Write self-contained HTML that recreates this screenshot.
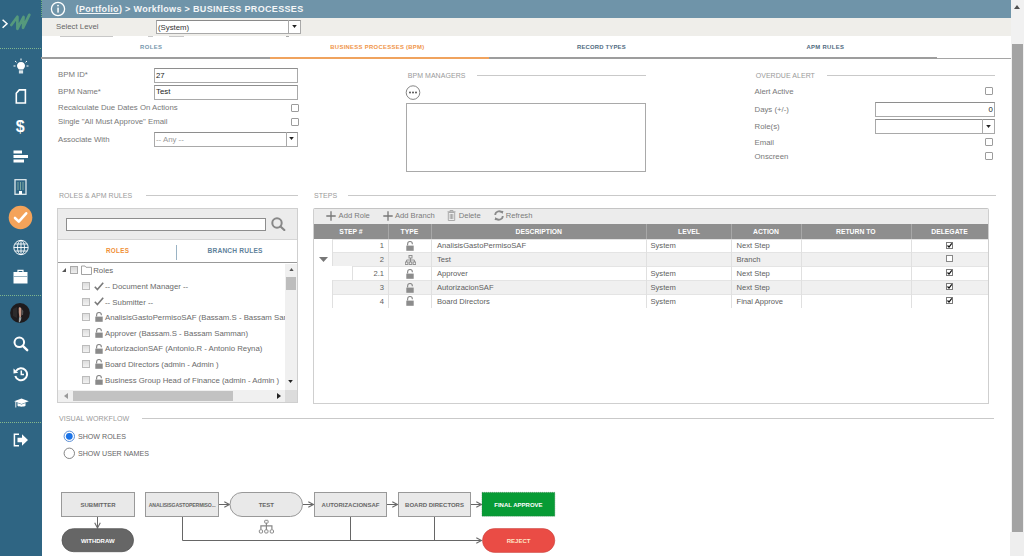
<!DOCTYPE html>
<html><head><meta charset="utf-8">
<style>
*{box-sizing:border-box;margin:0;padding:0}
html,body{width:1024px;height:556px;overflow:hidden;background:#fff;font-family:"Liberation Sans",sans-serif;color:#555}
.a{position:absolute}
.t{position:absolute;white-space:nowrap;line-height:10px}
#sb{left:0;top:0;width:41.5px;height:556px;background:#2f6583}
#hd{left:41.5px;top:0;width:969.5px;height:17.5px;background:#6f94a9}
#lv{left:41.5px;top:17.5px;width:969.5px;height:18px;background:#efeeea}
#scr{left:1011px;top:0;width:14px;height:556px;background:#f1f1f1}
.inp{position:absolute;background:#fff;border:1px solid #a9a9a9;border-top-color:#8e8e8e}
.cb{position:absolute;width:8px;height:8px;border:1px solid #9c9c9c;background:#fff;border-radius:1px}
.lbl{font-size:7.8px;color:#787878}
.sec{font-size:7px;color:#9a9a9a;letter-spacing:0.05px}
.hr{position:absolute;height:1px;background:#c9c9c9}
</style></head><body>
<div id="sb" class="a"></div>
<div id="hd" class="a"></div>
<div id="lv" class="a"></div>
<div id="scr" class="a"></div>

<!-- header -->
<div class="a" style="left:41px;top:0;width:1px;height:17px;border-left:1px dotted #6fae7e"></div>
<svg class="a" style="left:50px;top:1px" width="16" height="16" viewBox="0 0 16 16"><circle cx="8" cy="8" r="6.6" fill="none" stroke="#fff" stroke-width="1.3"/><rect x="7.3" y="6.6" width="1.5" height="5" fill="#fff"/><circle cx="8" cy="4.6" r="0.9" fill="#fff"/></svg>
<div class="t" style="left:75.6px;top:4.3px;font-size:9px;font-weight:bold;letter-spacing:0.33px;color:#f4f6f7">(<span style="text-decoration:underline">Portfolio</span>) &gt; Workflows &gt; BUSINESS PROCESSES</div>

<!-- select level -->
<div class="t lbl" style="left:56px;top:22px;color:#666">Select Level</div>
<div class="inp" style="left:156px;top:19.5px;width:145px;height:14.5px;border-top:1.5px solid #8a8a8a"></div>
<div class="a" style="left:288px;top:20px;width:1px;height:13.5px;background:#a9a9a9"></div>
<div class="t" style="left:158px;top:22.5px;font-size:7.8px;color:#333">(System)</div>

<!-- hidden row remnants -->
<div class="a" style="left:60px;top:35.5px;width:53px;height:1px;background:#c8c8c8"></div>
<div class="a" style="left:148px;top:35.5px;width:5px;height:1px;background:#c8c8c8"></div>
<div class="a" style="left:169px;top:35.5px;width:15px;height:1px;background:#c8c8c8"></div>
<div class="a" style="left:286px;top:35.5px;width:3px;height:1px;background:#aaa"></div>
<!-- tabs -->
<div class="t" style="left:140px;top:42px;font-size:5.9px;font-weight:bold;letter-spacing:0.4px;color:#7797ad">ROLES</div>
<div class="t" style="left:330.3px;top:42px;font-size:5.9px;font-weight:bold;letter-spacing:0.3px;color:#f0954a">BUSINESS PROCESSES (BPM)</div>
<div class="t" style="left:577px;top:42px;font-size:5.9px;font-weight:bold;letter-spacing:0.19px;color:#4e6a7e">RECORD TYPES</div>
<div class="t" style="left:806.4px;top:42px;font-size:5.9px;font-weight:bold;letter-spacing:0.35px;color:#4e6a7e">APM RULES</div>
<div class="a" style="left:41px;top:58px;width:969.5px;height:1px;background:#a5a5a5"></div>
<div class="a" style="left:41px;top:57px;width:896px;height:2px;background:#9d9d9d"></div>
<div class="a" style="left:270px;top:57px;width:219px;height:2px;background:#f0a35e"></div>


<!-- sidebar icons -->
<svg class="a" style="left:0;top:0" width="41" height="40" viewBox="0 0 41 40">
 <path d="M2.6 19.8 L7 23.8 L2.6 27.8" fill="none" stroke="#fff" stroke-width="1.5"/>
 <path d="M11.3 25 L17.4 16.8 L17.4 28.8 L23.5 17 L23 27.8 L29.3 14.8" fill="none" stroke="#55997c" stroke-width="2.7" stroke-linejoin="round" stroke-linecap="round"/>
</svg>
<div class="a" style="left:0;top:47.5px;width:41px;height:1px;border-top:1px dotted #7fb58f"></div>
<svg class="a" style="left:13px;top:58px" width="16" height="17" viewBox="0 0 16 17">
 <path d="M8 4 C5.2 4 4 6 4 7.8 C4 9.6 5.3 10.6 5.8 11.6 L10.2 11.6 C10.7 10.6 12 9.6 12 7.8 C12 6 10.8 4 8 4Z" fill="#fff"/>
 <rect x="5.9" y="12.3" width="4.2" height="3.2" fill="#d9e4ea"/>
 <path d="M8 0.5 V2.5 M2 3 L3.5 4.3 M14 3 L12.5 4.3 M0.5 8 H2.5 M13.5 8 H15.5" stroke="#fff" stroke-width="1"/>
</svg>
<svg class="a" style="left:15px;top:89px" width="12" height="15" viewBox="0 0 12 15">
 <path d="M4.3 0.9 H10.4 V14 H1.3 V4.2 Z" fill="none" stroke="#fff" stroke-width="1.6" stroke-linejoin="miter"/>
</svg>
<div class="t" style="left:15.8px;top:117.5px;font-size:16px;line-height:18px;font-weight:bold;color:#fff">$</div>
<svg class="a" style="left:13px;top:150px" width="16" height="14" viewBox="0 0 16 14">
 <rect x="0.5" y="0.5" width="8.5" height="3" fill="#fff"/><rect x="0.5" y="5" width="14.5" height="3" fill="#fff"/><rect x="0.5" y="9.5" width="10.5" height="3" fill="#fff"/>
</svg>
<svg class="a" style="left:14px;top:179px" width="13" height="16" viewBox="0 0 13 16">
 <rect x="1" y="0.7" width="11" height="14.6" fill="none" stroke="#dfe8ec" stroke-width="1.3"/>
 <path d="M4 3 V11 M6.5 3 V11 M9 3 V11" stroke="#8fb9a8" stroke-width="0.8"/>
 <rect x="5" y="12" width="3" height="3" fill="#fff"/>
</svg>
<svg class="a" style="left:8px;top:204.5px" width="25" height="25" viewBox="0 0 25 25">
 <circle cx="12.5" cy="12.5" r="11.8" fill="#f4a35a"/>
 <path d="M7 13 L10.8 16.6 L18.2 8.3" fill="none" stroke="#fff" stroke-width="2.6" stroke-linecap="round" stroke-linejoin="round"/>
</svg>
<svg class="a" style="left:12.5px;top:238.5px" width="16" height="17" viewBox="0 0 16 17">
 <g fill="none" stroke="#fff" stroke-width="0.9"><circle cx="8" cy="8.5" r="7.2"/><ellipse cx="8" cy="8.5" rx="3.5" ry="7.2"/><path d="M8 1.3 V15.7 M0.8 8.5 H15.2 M1.8 5 H14.2 M1.8 12 H14.2"/></g>
</svg>
<svg class="a" style="left:13px;top:269px" width="15" height="15" viewBox="0 0 15 15">
 <path d="M5 3 V1.3 H10 V3" fill="none" stroke="#fff" stroke-width="1.2"/>
 <rect x="0.5" y="3" width="14" height="11.5" fill="#fff"/>
 <rect x="0.5" y="7" width="14" height="0.8" fill="#7b9fb3"/>
</svg>
<div class="a" style="left:0;top:295px;width:41px;height:1px;border-top:1px dotted #7fb58f"></div>
<svg class="a" style="left:10px;top:303px" width="20" height="20" viewBox="0 0 20 20">
 <circle cx="10" cy="10" r="9.9" fill="#1e1b1d"/>
 <path d="M3 6 L7 4 L7 15 L3 13Z" fill="#2c2a2b"/>
 <path d="M9.3 4.3 C10.6 4 11.6 5 11.4 7 C11.3 9 11.6 11.5 10.9 14.5 L9.4 14.6 C9.2 12 8.5 9.5 8.8 7 C8.6 5.6 8.8 4.6 9.3 4.3Z" fill="#c99a88"/>
 <path d="M9 14.3 L11.4 14.3 L11 17 L9.8 19.3 L8.8 19.2 Z" fill="#9aa3a6"/>
 <path d="M11.8 6 L13.3 8 L13 12 L11.8 12Z" fill="#555"/>
</svg>
<svg class="a" style="left:13px;top:336px" width="16" height="16" viewBox="0 0 16 16">
 <circle cx="6.3" cy="6.3" r="4.8" fill="none" stroke="#fff" stroke-width="2"/>
 <path d="M9.8 9.8 L14.2 14.2" stroke="#fff" stroke-width="2.4" stroke-linecap="round"/>
</svg>
<svg class="a" style="left:13px;top:365.5px" width="16" height="16" viewBox="0 0 16 16">
 <path d="M3 5 A6 6 0 1 1 2.3 10" fill="none" stroke="#fff" stroke-width="2"/>
 <path d="M0.5 2.5 L5.2 6.8 L0.5 7.5 Z" fill="#fff"/>
 <path d="M8.3 4.5 V8.5 H11" fill="none" stroke="#fff" stroke-width="1.5"/>
</svg>
<svg class="a" style="left:13.5px;top:398px" width="15" height="11" viewBox="0 0 15 11">
 <path d="M0.2 3.2 L7.5 0.5 L14.8 3.2 L7.5 5.9 Z" fill="#fff"/>
 <path d="M3.5 5 V7.8 C5 9 10 9 11.5 7.8 V5 L7.5 6.6 Z" fill="#fff"/>
 <path d="M1.8 4 V9.5" stroke="#fff" stroke-width="0.9"/>
</svg>
<div class="a" style="left:0;top:421.5px;width:41px;height:1px;border-top:1px dotted #86b98c"></div>
<svg class="a" style="left:13px;top:433px" width="16" height="14" viewBox="0 0 16 14">
 <path d="M6 1.2 H1.4 V12.8 H6" fill="none" stroke="#fff" stroke-width="1.5"/>
 <path d="M4.5 4.8 H9 V1.3 L15 7 L9 12.7 V9.2 H4.5 Z" fill="#fff"/>
</svg>

<!-- form left -->
<div class="t lbl" style="left:58px;top:70px">BPM ID*</div>
<div class="inp" style="left:154px;top:68px;width:144px;height:15px"></div>
<div class="t" style="left:156px;top:70.5px;font-size:7.8px;color:#222">27</div>
<div class="t lbl" style="left:58px;top:87px">BPM Name*</div>
<div class="inp" style="left:154px;top:84.5px;width:144px;height:15px"></div>
<div class="t" style="left:156px;top:87px;font-size:7.8px;color:#222">Test</div>
<div class="t lbl" style="left:58px;top:103px">Recalculate Due Dates On Actions</div>
<div class="cb" style="left:290.5px;top:104px"></div>
<div class="t lbl" style="left:58px;top:117px">Single "All Must Approve" Email</div>
<div class="cb" style="left:290.5px;top:118px"></div>
<div class="t lbl" style="left:58px;top:135px">Associate With</div>
<div class="inp" style="left:154px;top:132px;width:144px;height:15px"></div>
<div class="a" style="left:285.5px;top:132px;width:1px;height:15px;background:#a9a9a9"></div>
<div class="t" style="left:156px;top:135px;font-size:7.8px;color:#999">-- Any --</div>
<svg class="a" style="left:289px;top:137px" width="5" height="3"><path d="M0.2 0 H4.8 L2.5 3Z" fill="#222"/></svg>
<svg class="a" style="left:291.5px;top:25px" width="5" height="3"><path d="M0.2 0 H4.8 L2.5 3Z" fill="#222"/></svg>

<!-- BPM managers -->
<div class="t sec" style="left:407.7px;top:71px">BPM MANAGERS</div>
<div class="hr" style="left:477px;top:75px;width:169px"></div>
<svg class="a" style="left:405px;top:85px" width="16" height="16" viewBox="0 0 16 16"><circle cx="8" cy="7.6" r="6.8" fill="#fff" stroke="#777" stroke-width="0.9"/><circle cx="5" cy="7.6" r="1" fill="#555"/><circle cx="8" cy="7.6" r="1" fill="#555"/><circle cx="11" cy="7.6" r="1" fill="#555"/></svg>
<div class="a" style="left:406px;top:103px;width:240px;height:69px;border:1px solid #a9a9a9;background:#fff"></div>

<!-- Overdue alert -->
<div class="t sec" style="left:755.7px;top:71px">OVERDUE ALERT</div>
<div class="hr" style="left:827px;top:75px;width:168px"></div>
<div class="t lbl" style="left:754.5px;top:87px">Alert Active</div>
<div class="cb" style="left:984.5px;top:87px"></div>
<div class="t lbl" style="left:754.5px;top:105px">Days (+/-)</div>
<div class="inp" style="left:874.5px;top:102px;width:120px;height:14.5px"></div>
<div class="t" style="left:988.5px;top:104.5px;font-size:7.8px;color:#222">0</div>
<div class="t lbl" style="left:754.5px;top:122px">Role(s)</div>
<div class="inp" style="left:874.5px;top:119px;width:120px;height:15px"></div>
<div class="a" style="left:982px;top:119px;width:1px;height:15px;background:#a9a9a9"></div>
<svg class="a" style="left:985.5px;top:125px" width="5" height="3"><path d="M0.2 0 H4.8 L2.5 3Z" fill="#222"/></svg>
<div class="t lbl" style="left:754.5px;top:137.5px">Email</div>
<div class="cb" style="left:984.5px;top:137.5px"></div>
<div class="t lbl" style="left:754.5px;top:151.5px">Onscreen</div>
<div class="cb" style="left:984.5px;top:152px"></div>

<!-- ROLES & APM RULES -->
<div class="t sec" style="left:59px;top:191px">ROLES &amp; APM RULES</div>
<div class="hr" style="left:146px;top:195px;width:152px"></div>
<div class="a" style="left:57px;top:208px;width:241px;height:195px;border:1px solid #cfcfcf;background:#fff;overflow:hidden">
 <div class="a" style="left:0;top:0;width:239px;height:30.5px;background:#ececec;border-bottom:1px solid #d6d6d6"></div>
 <div class="a" style="left:8px;top:8.5px;width:199.5px;height:13.5px;border:1px solid #8d8d8d;background:#fff"></div>
 <svg class="a" style="left:213px;top:8px" width="15" height="14" viewBox="0 0 15 14"><circle cx="6" cy="6" r="4.7" fill="none" stroke="#888" stroke-width="2"/><path d="M9.5 9.5 L13.3 13" stroke="#888" stroke-width="2.2" stroke-linecap="round"/></svg>
 <div class="t" style="left:48px;top:37px;font-size:6.3px;font-weight:bold;color:#f08f35;letter-spacing:0.3px">ROLES</div>
 <div class="a" style="left:118px;top:35.5px;width:1px;height:15.5px;background:#9ab3c4"></div>
 <div class="t" style="left:149.5px;top:37px;font-size:6.6px;font-weight:bold;color:#5f829b;letter-spacing:0.2px">BRANCH RULES</div>
 <div class="a" style="left:0;top:52.5px;width:239px;height:1.2px;background:#999"></div>
 <!-- v scrollbar -->
 <div class="a" style="left:226.5px;top:54.5px;width:12.5px;height:126px;background:#f0f0f0"></div>
 <svg class="a" style="left:230.5px;top:58.5px" width="5" height="3.5"><path d="M0 3.5 H5 L2.5 0Z" fill="#555"/></svg>
 <div class="a" style="left:227.5px;top:68px;width:10.5px;height:13px;background:#bdbdbd"></div>
 <svg class="a" style="left:230px;top:170.5px" width="5" height="3"><path d="M0.2 0 H4.8 L2.5 3Z" fill="#222"/></svg>
 <!-- h scrollbar -->
 <div class="a" style="left:0;top:180.5px;width:239px;height:13.5px;background:#f0f0f0"></div>
 <div class="a" style="left:14.5px;top:181.5px;width:160.5px;height:10.5px;background:#c2c2c2"></div>
 <svg class="a" style="left:5.5px;top:183.5px" width="4" height="6"><path d="M4 0 V6 L0 3Z" fill="#999"/></svg>
 <svg class="a" style="left:218.5px;top:183.5px" width="4" height="6"><path d="M0 0 V6 L4 3Z" fill="#222"/></svg>
 <div class="a" style="left:226.5px;top:180.5px;width:12.5px;height:13.5px;background:#dcdcdc"></div>
</div>
<div class="a" style="left:0;top:0;width:284.5px;height:388.5px;overflow:hidden"><svg class="a" style="left:62px;top:267.5px" width="4" height="4"><path d="M4 0 V4 H0Z" fill="#555"/></svg>
<div class="a" style="left:69.8px;top:266px;width:8px;height:8px;border:1px solid #aaa;background:linear-gradient(#d8d8d8,#eee)"></div>
<svg class="a" style="left:81px;top:264.5px" width="11" height="10" viewBox="0 0 11 10"><path d="M0.5 1 H4 L5 2.3 H10.5 V9.5 H0.5 Z" fill="#fff" stroke="#999" stroke-width="0.9"/></svg>
<div class="t" style="left:93.2px;top:266px;font-size:7.8px;color:#666">Roles</div>
<div class="a" style="left:81.5px;top:282px;width:8px;height:8px;border:1px solid #bcbcbc;background:linear-gradient(#dedede,#f2f2f2)"></div><svg class="a" style="left:94px;top:281.5px" width="10" height="9" viewBox="0 0 10 9"><path d="M0.8 4.8 L3.4 7.6 L9.2 0.8" fill="none" stroke="#7a7a7a" stroke-width="1.6"/></svg><div class="t" style="left:105px;top:281.8px;font-size:7.8px;color:#6a6a6a">-- Document Manager --</div><div class="a" style="left:81.5px;top:297.7px;width:8px;height:8px;border:1px solid #bcbcbc;background:linear-gradient(#dedede,#f2f2f2)"></div><svg class="a" style="left:94px;top:297.2px" width="10" height="9" viewBox="0 0 10 9"><path d="M0.8 4.8 L3.4 7.6 L9.2 0.8" fill="none" stroke="#7a7a7a" stroke-width="1.6"/></svg><div class="t" style="left:105px;top:297.5px;font-size:7.8px;color:#6a6a6a">-- Submitter --</div><div class="a" style="left:81.5px;top:313.3px;width:8px;height:8px;border:1px solid #bcbcbc;background:linear-gradient(#dedede,#f2f2f2)"></div><svg class="a" style="left:95px;top:312.3px" width="8" height="10" viewBox="0 0 8 10"><path d="M1.6 4.6 V2.9 C1.6 1 3 0.5 4 0.5 C5 0.5 6.4 1 6.4 2.9 V3.3" fill="none" stroke="#8a8a8a" stroke-width="1.2"/><rect x="0.3" y="4.6" width="7.4" height="5.2" fill="#8a8a8a"/></svg><div class="t" style="left:105px;top:313.1px;font-size:7.8px;color:#6a6a6a">AnalisisGastoPermisoSAF (Bassam.S - Bassam Samman)</div><div class="a" style="left:81.5px;top:329px;width:8px;height:8px;border:1px solid #bcbcbc;background:linear-gradient(#dedede,#f2f2f2)"></div><svg class="a" style="left:95px;top:328px" width="8" height="10" viewBox="0 0 8 10"><path d="M1.6 4.6 V2.9 C1.6 1 3 0.5 4 0.5 C5 0.5 6.4 1 6.4 2.9 V3.3" fill="none" stroke="#8a8a8a" stroke-width="1.2"/><rect x="0.3" y="4.6" width="7.4" height="5.2" fill="#8a8a8a"/></svg><div class="t" style="left:105px;top:328.8px;font-size:7.8px;color:#6a6a6a">Approver (Bassam.S - Bassam Samman)</div><div class="a" style="left:81.5px;top:344.6px;width:8px;height:8px;border:1px solid #bcbcbc;background:linear-gradient(#dedede,#f2f2f2)"></div><svg class="a" style="left:95px;top:343.6px" width="8" height="10" viewBox="0 0 8 10"><path d="M1.6 4.6 V2.9 C1.6 1 3 0.5 4 0.5 C5 0.5 6.4 1 6.4 2.9 V3.3" fill="none" stroke="#8a8a8a" stroke-width="1.2"/><rect x="0.3" y="4.6" width="7.4" height="5.2" fill="#8a8a8a"/></svg><div class="t" style="left:105px;top:344.4px;font-size:7.8px;color:#6a6a6a">AutorizacionSAF (Antonio.R - Antonio Reyna)</div><div class="a" style="left:81.5px;top:360.2px;width:8px;height:8px;border:1px solid #bcbcbc;background:linear-gradient(#dedede,#f2f2f2)"></div><svg class="a" style="left:95px;top:359.2px" width="8" height="10" viewBox="0 0 8 10"><path d="M1.6 4.6 V2.9 C1.6 1 3 0.5 4 0.5 C5 0.5 6.4 1 6.4 2.9 V3.3" fill="none" stroke="#8a8a8a" stroke-width="1.2"/><rect x="0.3" y="4.6" width="7.4" height="5.2" fill="#8a8a8a"/></svg><div class="t" style="left:105px;top:360.0px;font-size:7.8px;color:#6a6a6a">Board Directors (admin - Admin )</div><div class="a" style="left:81.5px;top:375.8px;width:8px;height:8px;border:1px solid #bcbcbc;background:linear-gradient(#dedede,#f2f2f2)"></div><svg class="a" style="left:95px;top:374.8px" width="8" height="10" viewBox="0 0 8 10"><path d="M1.6 4.6 V2.9 C1.6 1 3 0.5 4 0.5 C5 0.5 6.4 1 6.4 2.9 V3.3" fill="none" stroke="#8a8a8a" stroke-width="1.2"/><rect x="0.3" y="4.6" width="7.4" height="5.2" fill="#8a8a8a"/></svg><div class="t" style="left:105px;top:375.6px;font-size:7.8px;color:#6a6a6a">Business Group Head of Finance (admin - Admin )</div></div>

<!-- STEPS -->
<div class="t sec" style="left:314px;top:191px">STEPS</div>
<div class="hr" style="left:348px;top:195px;width:648px"></div>
<div class="a" style="left:312.5px;top:208px;width:676px;height:195.5px;border:1px solid #cfcfcf;border-top-color:#c4c4c4;background:#fff;border-radius:2px 2px 0 0"></div>
<div class="a" style="left:313.5px;top:209px;width:674px;height:15px;background:#ececec"></div>
<svg class="a" style="left:326px;top:210.5px" width="10" height="10" viewBox="0 0 10 10"><path d="M5 0.3 V9.7 M0.3 5 H9.7" stroke="#777" stroke-width="1.3"/></svg>
<div class="t" style="left:338.6px;top:211px;font-size:7.6px;color:#7a7a7a">Add Role</div>
<svg class="a" style="left:382.5px;top:210.5px" width="10" height="10" viewBox="0 0 10 10"><path d="M5 0.3 V9.7 M0.3 5 H9.7" stroke="#777" stroke-width="1.3"/></svg>
<div class="t" style="left:395px;top:211px;font-size:7.6px;color:#7a7a7a">Add Branch</div>
<svg class="a" style="left:447px;top:210px" width="9" height="11" viewBox="0 0 9 11"><g fill="none" stroke="#aaa" stroke-width="1"><path d="M0.5 1.8 H8.5 M3 1.8 V0.5 H6 V1.8"/><path d="M1.3 2.5 H7.7 V10.5 H1.3 Z"/><path d="M3.2 4 V9 M4.5 4 V9 M5.8 4 V9"/></g></svg>
<div class="t" style="left:458.7px;top:211px;font-size:7.6px;color:#7a7a7a">Delete</div>
<svg class="a" style="left:493.5px;top:210px" width="10" height="11" viewBox="0 0 10 11"><g fill="none" stroke="#8a8a8a" stroke-width="1.8"><path d="M1.2 5 A3.9 3.9 0 0 1 8 2.6"/><path d="M8.8 6 A3.9 3.9 0 0 1 2 8.4"/></g><path d="M6.3 0.8 L9.4 1 L8.6 4 Z M3.7 10.2 L0.6 10 L1.4 7 Z" fill="#888"/></svg>
<div class="t" style="left:505.8px;top:211px;font-size:7.6px;color:#7a7a7a">Refresh</div>
<div class="a" style="left:313.5px;top:224px;width:674px;height:14.5px;background:#8e8e8e"></div>
<div class="t" style="left:313.5px;top:227px;width:75px;text-align:center;font-size:6.8px;font-weight:bold;color:#fff">STEP #</div>
<div class="t" style="left:388px;top:227px;width:43px;text-align:center;font-size:6.8px;font-weight:bold;color:#fff">TYPE</div>
<div class="t" style="left:431px;top:227px;width:215.5px;text-align:center;font-size:6.8px;font-weight:bold;color:#fff">DESCRIPTION</div>
<div class="t" style="left:646.5px;top:227px;width:85px;text-align:center;font-size:6.8px;font-weight:bold;color:#fff">LEVEL</div>
<div class="t" style="left:731.5px;top:227px;width:69px;text-align:center;font-size:6.8px;font-weight:bold;color:#fff">ACTION</div>
<div class="t" style="left:800.5px;top:227px;width:110.5px;text-align:center;font-size:6.8px;font-weight:bold;color:#fff">RETURN TO</div>
<div class="t" style="left:911px;top:227px;width:77px;text-align:center;font-size:6.8px;font-weight:bold;color:#fff">DELEGATE</div>
<div class="a" style="left:388px;top:224px;width:1px;height:14.5px;background:#a8a8a8"></div><div class="a" style="left:431px;top:224px;width:1px;height:14.5px;background:#a8a8a8"></div><div class="a" style="left:646px;top:224px;width:1px;height:14.5px;background:#a8a8a8"></div><div class="a" style="left:731px;top:224px;width:1px;height:14.5px;background:#a8a8a8"></div><div class="a" style="left:800.5px;top:224px;width:1px;height:14.5px;background:#a8a8a8"></div><div class="a" style="left:911px;top:224px;width:1px;height:14.5px;background:#a8a8a8"></div>
<svg class="a" style="left:318.5px;top:256.5px" width="9" height="5"><path d="M0 0 H9 L4.5 5Z" fill="#777"/></svg>
<div class="a" style="left:332px;top:238.5px;width:656px;height:1px;background:#e4e4e4"></div><div class="a" style="left:332px;top:238.5px;width:1px;height:13.9px;background:#e0e0e0"></div><div class="t" style="left:329px;top:241.0px;width:55px;text-align:right;font-size:7.6px;color:#606060">1</div><svg class="a" style="left:406px;top:240.8px" width="8" height="10" viewBox="0 0 8 10"><path d="M1.6 4.6 V2.9 C1.6 1 3 0.5 4 0.5 C5 0.5 6.4 1 6.4 2.9 V3.3" fill="none" stroke="#8c8c8c" stroke-width="1.2"/><rect x="0.3" y="4.6" width="7.4" height="5.2" fill="#8c8c8c"/></svg><div class="t" style="left:437px;top:241.0px;font-size:7.6px;color:#606060">AnalisisGastoPermisoSAF</div><div class="t" style="left:650.5px;top:241.0px;font-size:7.6px;color:#606060">System</div><div class="t" style="left:736.5px;top:241.0px;font-size:7.6px;color:#606060">Next Step</div><svg class="a" style="left:946px;top:241.5px" width="7" height="7" viewBox="0 0 7 7"><rect x="0.5" y="0.5" width="6" height="6" fill="#fff" stroke="#7a7a7a"/><path d="M1.5 3.5 L3 5 L5.8 1.4" fill="none" stroke="#111" stroke-width="1.2"/></svg><div class="a" style="left:332px;top:252.4px;width:656px;height:13.9px;background:#f0f0f0"></div><div class="a" style="left:332px;top:252.4px;width:656px;height:1px;background:#e4e4e4"></div><div class="a" style="left:332px;top:252.4px;width:1px;height:13.9px;background:#e0e0e0"></div><div class="t" style="left:329px;top:254.9px;width:55px;text-align:right;font-size:7.6px;color:#606060">2</div><svg class="a" style="left:404.5px;top:254.6px" width="11" height="10" viewBox="0 0 11 10"><g fill="none" stroke="#888" stroke-width="0.9"><rect x="4" y="0.5" width="3" height="2.5"/><path d="M5.5 3 V5 M1.6 7 V5 H9.4 V7 M5.5 5 V7"/><rect x="0.3" y="7" width="2.6" height="2.5"/><rect x="4.2" y="7" width="2.6" height="2.5"/><rect x="8.1" y="7" width="2.6" height="2.5"/></g></svg><div class="t" style="left:437px;top:254.9px;font-size:7.6px;color:#606060">Test</div><div class="t" style="left:736.5px;top:254.9px;font-size:7.6px;color:#606060">Branch</div><svg class="a" style="left:946px;top:255.4px" width="7" height="7" viewBox="0 0 7 7"><rect x="0.5" y="0.5" width="6" height="6" fill="#fff" stroke="#888"/></svg><div class="a" style="left:351.5px;top:266.3px;width:636.5px;height:1px;background:#e4e4e4"></div><div class="a" style="left:351.5px;top:266.3px;width:1px;height:13.9px;background:#e0e0e0"></div><div class="t" style="left:329px;top:268.8px;width:55px;text-align:right;font-size:7.6px;color:#606060">2.1</div><svg class="a" style="left:406px;top:268.6px" width="8" height="10" viewBox="0 0 8 10"><path d="M1.6 4.6 V2.9 C1.6 1 3 0.5 4 0.5 C5 0.5 6.4 1 6.4 2.9 V3.3" fill="none" stroke="#8c8c8c" stroke-width="1.2"/><rect x="0.3" y="4.6" width="7.4" height="5.2" fill="#8c8c8c"/></svg><div class="t" style="left:437px;top:268.8px;font-size:7.6px;color:#606060">Approver</div><div class="t" style="left:650.5px;top:268.8px;font-size:7.6px;color:#606060">System</div><div class="t" style="left:736.5px;top:268.8px;font-size:7.6px;color:#606060">Next Step</div><svg class="a" style="left:946px;top:269.3px" width="7" height="7" viewBox="0 0 7 7"><rect x="0.5" y="0.5" width="6" height="6" fill="#fff" stroke="#7a7a7a"/><path d="M1.5 3.5 L3 5 L5.8 1.4" fill="none" stroke="#111" stroke-width="1.2"/></svg><div class="a" style="left:332px;top:280.2px;width:656px;height:13.9px;background:#f0f0f0"></div><div class="a" style="left:332px;top:280.2px;width:656px;height:1px;background:#e4e4e4"></div><div class="a" style="left:332px;top:280.2px;width:1px;height:13.9px;background:#e0e0e0"></div><div class="t" style="left:329px;top:282.7px;width:55px;text-align:right;font-size:7.6px;color:#606060">3</div><svg class="a" style="left:406px;top:282.5px" width="8" height="10" viewBox="0 0 8 10"><path d="M1.6 4.6 V2.9 C1.6 1 3 0.5 4 0.5 C5 0.5 6.4 1 6.4 2.9 V3.3" fill="none" stroke="#8c8c8c" stroke-width="1.2"/><rect x="0.3" y="4.6" width="7.4" height="5.2" fill="#8c8c8c"/></svg><div class="t" style="left:437px;top:282.7px;font-size:7.6px;color:#606060">AutorizacionSAF</div><div class="t" style="left:650.5px;top:282.7px;font-size:7.6px;color:#606060">System</div><div class="t" style="left:736.5px;top:282.7px;font-size:7.6px;color:#606060">Next Step</div><svg class="a" style="left:946px;top:283.2px" width="7" height="7" viewBox="0 0 7 7"><rect x="0.5" y="0.5" width="6" height="6" fill="#fff" stroke="#7a7a7a"/><path d="M1.5 3.5 L3 5 L5.8 1.4" fill="none" stroke="#111" stroke-width="1.2"/></svg><div class="a" style="left:332px;top:294.1px;width:656px;height:1px;background:#e4e4e4"></div><div class="a" style="left:332px;top:294.1px;width:1px;height:13.9px;background:#e0e0e0"></div><div class="t" style="left:329px;top:296.6px;width:55px;text-align:right;font-size:7.6px;color:#606060">4</div><svg class="a" style="left:406px;top:296.40000000000003px" width="8" height="10" viewBox="0 0 8 10"><path d="M1.6 4.6 V2.9 C1.6 1 3 0.5 4 0.5 C5 0.5 6.4 1 6.4 2.9 V3.3" fill="none" stroke="#8c8c8c" stroke-width="1.2"/><rect x="0.3" y="4.6" width="7.4" height="5.2" fill="#8c8c8c"/></svg><div class="t" style="left:437px;top:296.6px;font-size:7.6px;color:#606060">Board Directors</div><div class="t" style="left:650.5px;top:296.6px;font-size:7.6px;color:#606060">System</div><div class="t" style="left:736.5px;top:296.6px;font-size:7.6px;color:#606060">Final Approve</div><svg class="a" style="left:946px;top:297.1px" width="7" height="7" viewBox="0 0 7 7"><rect x="0.5" y="0.5" width="6" height="6" fill="#fff" stroke="#7a7a7a"/><path d="M1.5 3.5 L3 5 L5.8 1.4" fill="none" stroke="#111" stroke-width="1.2"/></svg><div class="a" style="left:388px;top:238.5px;width:1px;height:69px;background:#e0e0e0"></div><div class="a" style="left:431px;top:238.5px;width:1px;height:69px;background:#e0e0e0"></div><div class="a" style="left:646px;top:238.5px;width:1px;height:69px;background:#e0e0e0"></div><div class="a" style="left:731px;top:238.5px;width:1px;height:69px;background:#e0e0e0"></div><div class="a" style="left:800.5px;top:238.5px;width:1px;height:69px;background:#e0e0e0"></div><div class="a" style="left:911px;top:238.5px;width:1px;height:69px;background:#e0e0e0"></div>
<!-- VISUAL WORKFLOW -->
<div class="t sec" style="left:59px;top:414.2px;font-size:7.1px">VISUAL WORKFLOW</div>
<div class="hr" style="left:141.5px;top:417.6px;width:852.5px"></div>
<svg class="a" style="left:63px;top:429.5px" width="13" height="13" viewBox="0 0 13 13"><circle cx="6.3" cy="6.3" r="5.2" fill="#fff" stroke="#5b8fd6" stroke-width="1"/><circle cx="6.3" cy="6.3" r="3.4" fill="#1a73e8"/></svg>
<div class="t" style="left:78px;top:431.5px;font-size:7.1px;color:#666">SHOW ROLES</div>
<svg class="a" style="left:63px;top:447.3px" width="13" height="13" viewBox="0 0 13 13"><circle cx="6.3" cy="6.3" r="5.2" fill="#fff" stroke="#777" stroke-width="0.9"/></svg>
<div class="t" style="left:78px;top:449px;font-size:7.1px;color:#666">SHOW USER NAMES</div>

<svg class="a" style="left:0;top:480px" width="600" height="76" viewBox="0 480 600 76">
 <defs><marker id="ar" markerWidth="8" markerHeight="8" refX="7" refY="4" orient="auto" markerUnits="userSpaceOnUse"><path d="M1.8 1.2 L7 4 L1.8 6.8" fill="none" stroke="#6a6a6a" stroke-width="1.1"/></marker></defs>
 <g stroke="#666" stroke-width="1" fill="none">
  <path d="M97.5 516.5 V528" marker-end="url(#ar)"/>
  <path d="M218.5 504.5 H229.5" marker-end="url(#ar)"/>
  <path d="M302.5 504.5 H313.5" marker-end="url(#ar)"/>
  <path d="M386.5 504.5 H397.5" marker-end="url(#ar)"/>
  <path d="M470.5 504.5 H481.5" marker-end="url(#ar)"/>
  <path d="M182.5 516.5 V540.5 H481.5" marker-end="url(#ar)"/>
  <path d="M350.5 516.5 V540.5 M434.5 516.5 V540.5"/>
 </g>
 <g stroke="#999" stroke-width="1" fill="#e9e9e9">
  <rect x="61.5" y="492.5" width="73" height="24"/>
  <rect x="145.5" y="492.5" width="73" height="24"/>
  <rect x="230" y="492.5" width="72.5" height="24" rx="12" ry="12"/>
  <rect x="314.5" y="492.5" width="72" height="24"/>
  <rect x="398.5" y="492.5" width="72" height="24"/>
 </g>
 <rect x="62" y="528.7" width="71.5" height="23" rx="11.5" ry="11.5" fill="#666" stroke="#555" stroke-width="0.8"/>
 <rect x="482" y="492.4" width="72.8" height="23.8" fill="#079b35" stroke="#2c7a45" stroke-width="0.6" stroke-dasharray="1 1"/>
 <rect x="482.5" y="528.6" width="72.3" height="23.8" rx="11.9" ry="11.9" fill="#ea4c45" stroke="#c9453f" stroke-width="0.6"/>
 <g font-family="Liberation Sans" font-weight="bold" text-anchor="middle" font-size="6.0">
  <text x="98" y="507" fill="#666">SUBMITTER</text>
  <text x="182.2" y="506.5" fill="#666" font-size="5.1" letter-spacing="-0.12">ANALISISGASTOPERMISO...</text>
  <text x="266.3" y="507" fill="#666">TEST</text>
  <text x="350.5" y="507" fill="#666">AUTORIZACIONSAF</text>
  <text x="434.5" y="507" fill="#666">BOARD DIRECTORS</text>
  <text x="518.4" y="507" fill="#fff">FINAL APPROVE</text>
  <text x="97.8" y="543" fill="#fff">WITHDRAW</text>
  <text x="518.6" y="543" fill="#ffe6c8">REJECT</text>
 </g>
 <g fill="none" stroke="#888" stroke-width="1">
  <rect x="264.7" y="520.3" width="3.4" height="2.8" rx="0.6"/>
  <path d="M266.4 523.1 V529.8 M260.9 529.5 V525.8 H271.9 V529.5" stroke-width="1.2"/>
  <rect x="259.3" y="529.8" width="3.3" height="3.2" rx="1"/>
  <rect x="264.7" y="529.8" width="3.3" height="3.2" rx="1"/>
  <rect x="270.2" y="529.8" width="3.3" height="3.2" rx="1"/>
 </g>
</svg>

<!-- page scrollbar -->
<svg class="a" style="left:1014px;top:5px" width="6" height="4"><path d="M0 4 H6 L3 0Z" fill="#505050"/></svg>
<div class="a" style="left:1012px;top:44px;width:10.5px;height:488px;background:#a3a3a3"></div>
<div class="a" style="left:1010px;top:532px;width:14px;height:24px;background:#eeeeee"></div>
</body></html>
